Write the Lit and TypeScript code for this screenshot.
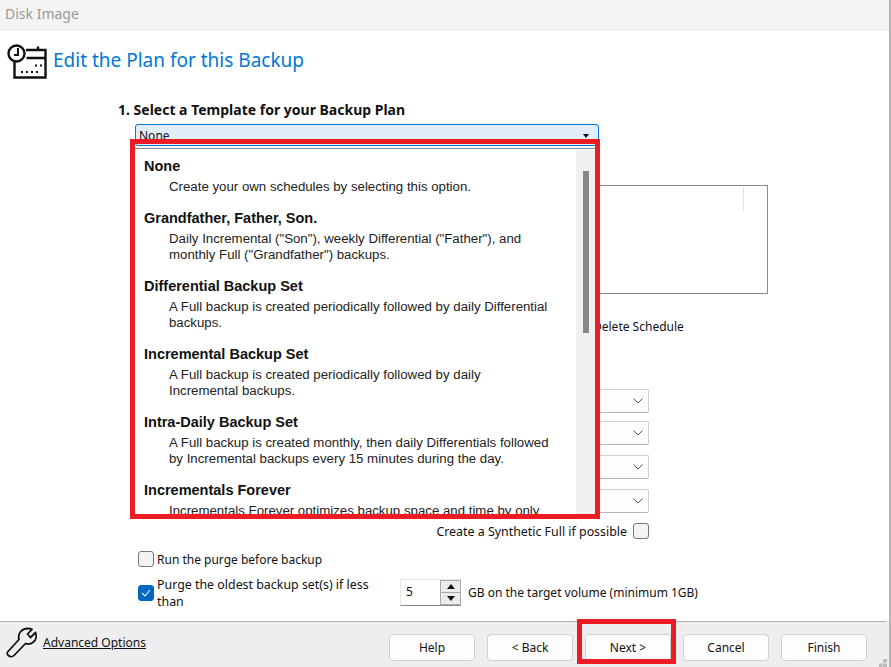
import { LitElement, html, css, svg } from "lit";
import { customElement } from "lit/decorators.js";

const ITEMS: [string, string[]][] = [
  ["None", ["Create your own schedules by selecting this option."]],
  ["Grandfather, Father, Son.", ['Daily Incremental ("Son"), weekly Differential ("Father"), and', 'monthly Full ("Grandfather") backups.']],
  ["Differential Backup Set", ["A Full backup is created periodically followed by daily Differential", "backups."]],
  ["Incremental Backup Set", ["A Full backup is created periodically followed by daily", "Incremental backups."]],
  ["Intra-Daily Backup Set", ["A Full backup is created monthly, then daily Differentials followed", "by Incremental backups every 15 minutes during the day."]],
  ["Incrementals Forever", ["Incrementals Forever optimizes backup space and time by only"]],
];

const chevron = svg`<svg width="10" height="6" viewBox="0 0 10 6"><path d="M.5.5 5 5 9.5.5" fill="none" stroke="#555" stroke-width="1"/></svg>`;

@customElement("app-root")
export class AppRoot extends LitElement {
  static styles = css`
    :host { display: block; width: 891px; height: 667px; position: relative; overflow: hidden; background: #fff;
      font-family: "Noto Sans", sans-serif; font-size: 12px; color: #111; }
    .window { width: 891px; height: 667px; box-sizing: border-box; display: flex; flex-direction: column; border-right: 2px solid #b4b4b4; }
    .title { height: 31px; flex: none; background: #f3f3f3; color: #999; font-size: 14px; line-height: 27px; padding-left: 5px; box-sizing: border-box; }
    .main { flex: 1; min-height: 0; padding-top: 10px; box-sizing: border-box; }
    .head { display: flex; align-items: flex-start; gap: 6px; padding-left: 7px; height: 59px; }
    .head h1 { margin: 0; font-weight: 400; font-size: 19px; line-height: 38px; color: #0078d7; }
    .section { margin-left: 118px; font-weight: 700; font-size: 14px; line-height: 20px; height: 24px; }
    .combo { margin-left: 135px; width: 464px; height: 22px; box-sizing: border-box; border: 1px solid #0078d4; border-radius: 3px;
      background: #e1eef9; font-size: 12px; padding-left: 3px; line-height: 21px; display: flex; justify-content: space-between; }
    .combo i { width: 0; height: 0; border: 3px solid transparent; border-top: 4px solid #111; border-bottom: 0; margin: 9px 9px 0 0; }
    .box { margin: 39px 0 0 135px; width: 633px; height: 109px; box-sizing: border-box; border: 1px solid #8a8a90; display: flex; justify-content: flex-end; padding: 1px 23px 0 0; }
    .box b { width: 1px; height: 25px; background: #e3e3e3; }
    .del { margin-top: 24px; padding-left: 593px; line-height: 18px; height: 18px; }
    .selects { margin: 53px 0 0 400px; width: 249px; display: flex; flex-direction: column; }
    .sel { height: 24px; box-sizing: border-box; border: 1px solid #d0d0d0; border-bottom-color: #b5b5b5; border-radius: 2px; background: #fdfdfd; display: flex; justify-content: flex-end; align-items: center; padding-right: 5px; margin-bottom: 10px; }
    .sel:first-child { margin-bottom: 8px; }
    .syn { display: flex; justify-content: flex-end; align-items: center; gap: 6px; width: 649px; height: 16px; font-size: 12.4px; }
    .cb { width: 16px; height: 16px; flex: none; box-sizing: border-box; border: 1px solid #777; border-radius: 3px; background: #f3f3f3; }
    .cb.on { background: #0067c0; border-color: #0067c0; display: flex; align-items: center; justify-content: center; }
    .run { display: flex; align-items: center; gap: 3px; margin: 12px 0 0 138px; height: 16px; }
    .purge { display: flex; margin: 11px 0 0 138px; height: 29px; align-items: center; }
    .purge .txt { width: 243px; box-sizing: border-box; padding-right: 28px; margin-left: 3px; line-height: 17px; font-size: 12.4px; }
    .spin { width: 61px; height: 27px; box-sizing: border-box; display: flex; border-top: 1px solid #e6e6e6; border-left: 1px solid #e6e6e6; border-bottom: 1px solid #8a8a8a; background: #fff; }
    .spin span { flex: 1; padding-left: 5px; line-height: 23px; }
    .btns { width: 21px; display: flex; flex-direction: column; gap: 1px; border: 1px solid #aaa; box-sizing: border-box; background: #aaa; }
    .btns div { flex: 1; background: #ececec; display: flex; align-items: center; justify-content: center; }
    .gb { margin-left: 7px; }
    .foot { height: 46px; flex: none; box-sizing: border-box; background: #eeeef0; display: flex; align-items: flex-start; position: relative; padding-top: 1px; }
    .foot::before { content: ""; position: absolute; left: 0; right: 2px; top: 0; height: 1px; background: #b0b0b0; }
    .adv { display: flex; align-items: flex-start; padding: 5px 0 0 6px; gap: 5px; width: 383px; box-sizing: content-box; }
    .adv a { color: #111; text-decoration: underline; line-height: 30px; margin-top: 1px; }
    .buttons { display: flex; gap: 12px; padding-top: 12px; }
    .btn { width: 86px; height: 27px; box-sizing: border-box; border: 1px solid #d0d0d0; border-radius: 4px; background: #fdfdfd; text-align: center; line-height: 25px; }
    .grip { position: absolute; right: 1px; bottom: 0; }
    .popup { position: absolute; left: 135px; top: 148px; width: 460px; height: 366px; background: #fff; border-top: 1px solid #8a8a90; box-sizing: border-box; display: flex; font-family: "Liberation Sans", sans-serif; font-size: 13.25px; overflow: hidden; }
    .list { flex: 1; padding: 10px 0 0 9px; min-width: 0; }
    .item { margin-bottom: 16px; }
    .item h3 { margin: 0 0 5px; font-size: 14.5px; line-height: 15px; font-weight: 700; color: #111; }
    .item p { margin: 0 0 0 25px; line-height: 16px; white-space: nowrap; color: #222; }
    .track { width: 19px; flex: none; background: #f0f0f0; margin-top: 1px; padding: 21px 0 0 7px; box-sizing: border-box; }
    .thumb { width: 6px; height: 162px; background: #888; }
    .red { position: absolute; box-sizing: border-box; border: 5px solid #ed1c24; pointer-events: none; }
    .r1 { left: 130px; top: 139px; width: 470px; height: 380px; }
    .r2 { left: 577px; top: 619px; width: 99px; height: 45px; }
  `;

  render() {
    return html`
      <div class="window">
        <div class="title">Disk Image</div>
        <div class="main">
          <div class="head">
            <svg width="40" height="38" viewBox="0 0 40 38" fill="none" stroke="#111" stroke-width="2.4">
              <circle cx="9.500" cy="12.500" r="8"/>
              <path d="M11 7v7H7" stroke-width="2"/>
              <path d="M19 9H38.500V36.500H7.500V21M19.500 17H38.500"/>
              <path d="M31 5.500v3.500"/>
              <path d="M28 24.500h2m3 0h2M14 31h2m3 0h2m3 0h2m3 0h2" stroke-width="2.200"/>
            </svg>
            <h1>Edit the Plan for this Backup</h1>
          </div>
          <div class="section">1. Select a Template for your Backup Plan</div>
          <div class="combo">None<i></i></div>
          <div class="box"><b></b></div>
          <div class="del">Delete Schedule</div>
          <div class="selects">
            ${[0, 1, 2, 3].map(() => html`<div class="sel">${chevron}</div>`)}
          </div>
          <div class="syn"><span>Create a Synthetic Full if possible</span><div class="cb"></div></div>
          <div class="run"><div class="cb"></div><span>Run the purge before backup</span></div>
          <div class="purge">
            <div class="cb on"><svg width="10" height="8" viewBox="0 0 10 8"><path d="M1 4l3 3 5-6" fill="none" stroke="#fff" stroke-width="1.1"/></svg></div>
            <div class="txt">Purge the oldest backup set(s) if less than</div>
            <div class="spin"><span>5</span><div class="btns">
              <div><svg width="8" height="5" viewBox="0 0 8 5"><path d="M0 5 4 0l4 5z" fill="#111"/></svg></div>
              <div><svg width="8" height="5" viewBox="0 0 8 5"><path d="M0 0l4 5 4-5z" fill="#111"/></svg></div>
            </div></div>
            <span class="gb">GB on the target volume (minimum 1GB)</span>
          </div>
        </div>
        <div class="foot">
          <div class="adv">
            <svg width="32" height="32" viewBox="0 0 32 32" fill="none" stroke="#111" stroke-width="1.800" stroke-linejoin="round">
              <path d="M2 24.500 13 12.500C11.500 7 15 1.500 22 1.500c1.500 0 3 .3 4 .8L21.500 7l3 3.500 5-5c1.500 3.500.5 7.500-2 9.500-2.500 2-5.500 2.500-8 1.500L8 28.500c-1.500 1.500-4 1.500-5.500 0-1.500-1-1.700-2.700-.5-4z"/>
            </svg>
            <a>Advanced Options</a>
          </div>
          <div class="buttons">
            ${["Help", "< Back", "Next >", "Cancel", "Finish"].map((t) => html`<div class="btn">${t}</div>`)}
          </div>
          <svg class="grip" width="9" height="8" viewBox="0 0 9 8"><path d="M4 0h4v3.500H4zM0 4.500h3.500V8H0zM4 4.500h4V8H4z" fill="#bbb"/></svg>
        </div>
      </div>
      <div class="popup">
        <div class="list">
          ${ITEMS.map(([t, lines]) => html`<div class="item"><h3>${t}</h3>${lines.map((l) => html`<p>${l}</p>`)}</div>`)}
        </div>
        <div class="track"><div class="thumb"></div></div>
      </div>
      <div class="red r1"></div>
      <div class="red r2"></div>
    `;
  }
}
